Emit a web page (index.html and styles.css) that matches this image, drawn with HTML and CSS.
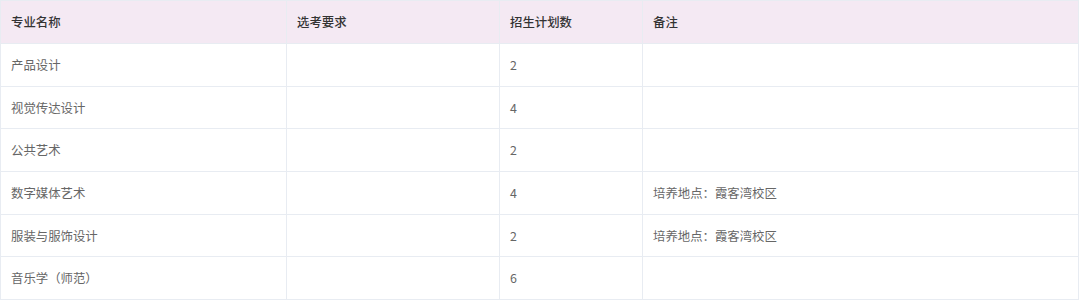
FILE: index.html
```html
<!DOCTYPE html>
<html lang="zh">
<head>
<meta charset="utf-8">
<link rel="stylesheet" href="styles.css">
</head>
<body>
<table class="plan">
  <colgroup>
    <col class="c1"><col class="c2"><col class="c3"><col class="c4">
  </colgroup>
  <thead>
    <tr><th>专业名称</th><th>选考要求</th><th>招生计划数</th><th>备注</th></tr>
  </thead>
  <tbody>
    <tr><td>产品设计</td><td></td><td>2</td><td></td></tr>
    <tr><td>视觉传达设计</td><td></td><td>4</td><td></td></tr>
    <tr><td>公共艺术</td><td></td><td>2</td><td></td></tr>
    <tr><td>数字媒体艺术</td><td></td><td>4</td><td>培养地点：霞客湾校区</td></tr>
    <tr><td>服装与服饰设计</td><td></td><td>2</td><td>培养地点：霞客湾校区</td></tr>
    <tr><td>音乐学（师范）</td><td></td><td>6</td><td></td></tr>
  </tbody>
</table>
</body>
</html>
```
FILE: styles.css
```css
html, body {
  margin: 0;
  padding: 0;
  background: #ffffff;
}
body {
  font-family: "Noto Sans CJK SC", "Noto Sans", sans-serif;
}
.plan {
  border-collapse: collapse;
  table-layout: fixed;
  width: 1078px;
}
.c1 { width: 286px; }
.c2 { width: 213px; }
.c3 { width: 143px; }
.c4 { width: 436px; }
.plan th,
.plan td {
  border: 1px solid #e8ecf2;
  padding: 0 10px;
  text-align: left;
  vertical-align: middle;
  font-size: 12.4px;
  line-height: 18px;
}
.plan th {
  height: 42px;
  background: #f4e9f3;
  color: #333333;
  font-weight: 500;
}
.plan td {
  height: 41.7px;
  color: #666666;
  font-weight: 400;
}
```
